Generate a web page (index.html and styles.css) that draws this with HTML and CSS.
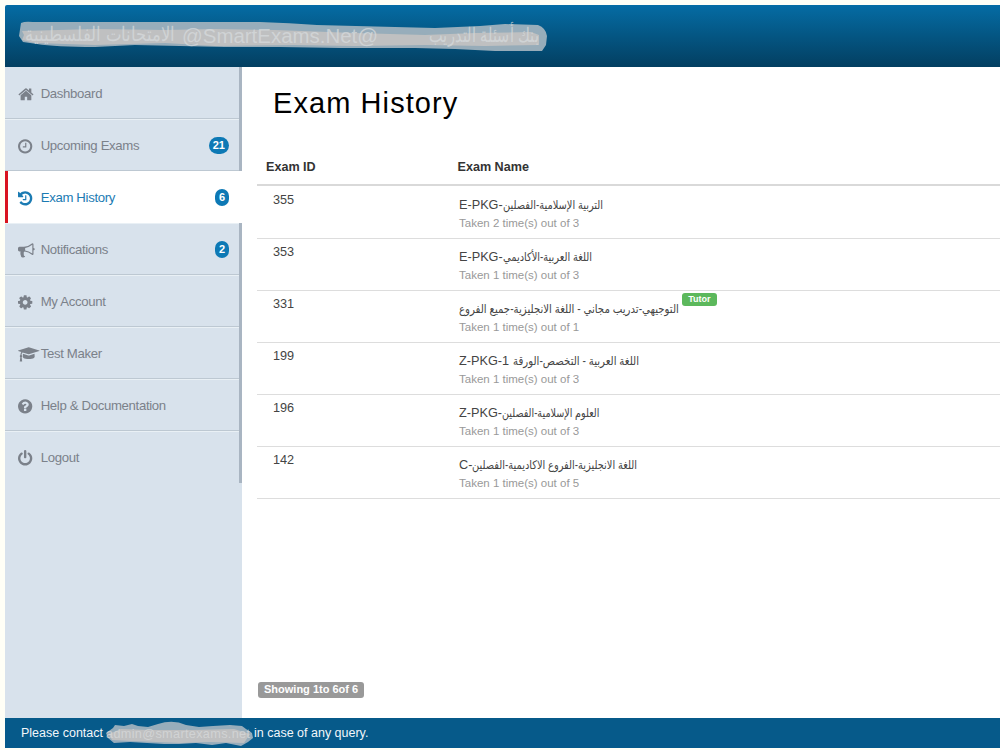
FILE: index.html
```html
<!DOCTYPE html>
<html lang="en">
<head>
<meta charset="utf-8">
<title>Exam History</title>
<link rel="stylesheet" href="styles.css">
</head>
<body>
<div class="app">
  <header class="header">
    <svg class="brand" viewBox="0 0 560 62" width="560" height="62">
      <path class="smear" d="M16 18Q20 16 28 17L130 17 255 17Q285 18 312 20L390 22 430 23 475 21 500 19 533 20Q541 23 542 31L541 40 537 46 490 46 450 44 410 43 335 43 275 42 220 42 130 40 90 42Q50 42 32 39L18 37 14 31Z"/>
      <path class="smear-core" d="M17 26L90 24 160 25 210 24 270 25 350 28 420 30 470 28 526 27 534 30 534 40 480 41 420 40 350 41 290 40 210 41 160 38 90 40 30 38 17 35 19 30Z"/>
      <text x="177" y="38" class="brand-text" textLength="196" lengthAdjust="spacingAndGlyphs">@SmartExams.Net@</text>
      <text x="424" y="37" class="brand-text" textLength="110" lengthAdjust="spacingAndGlyphs">بنك أسئلة التدريب</text>
      <text x="20" y="36" class="brand-text" textLength="150" lengthAdjust="spacingAndGlyphs">الامتحانات الفلسطينية</text>
    </svg>
  </header>
  <div class="body">
    <nav class="sidebar">
      <a class="item"><svg class="icon" viewBox="40 0 1792 1792"><path d="M1472 992v480q0 26-19 45t-45 19h-384v-384h-256v384h-384q-26 0-45-19t-19-45v-480q0-1 .5-3t.5-3l575-474 575 474q1 2 1 6zm223-69l-62 74q-8 9-21 11h-3q-13 0-21-7l-692-577-692 577q-12 8-24 7-13-2-21-11l-62-74q-8-10-7-23.500t11-21.500l719-599q32-26 76-26t76 26l244 204v-195q0-14 9-23t23-9h192q14 0 23 9t9 23v408l219 182q10 8 11 21.500t-7 23.500z"/></svg><span class="label">Dashboard</span></a>
      <a class="item"><svg class="icon" viewBox="128 0 1792 1792"><path d="M1024 544v448q0 14-9 23t-23 9h-320q-14 0-23-9t-9-23v-64q0-14 9-23t23-9h224v-352q0-14 9-23t23-9h64q14 0 23 9t9 23zm416 352q0-148-73-273t-198-198-273-73-273 73-198 198-73 273 73 273 198 198 273 73 273-73 198-198 73-273zm224 0q0 209-103 385.500t-279.500 279.500-385.500 103-385.500-103-279.500-279.500-103-385.500 103-385.500 279.500-279.500 385.500-103 385.500 103 279.500 279.500 103 385.500z"/></svg><span class="label">Upcoming Exams</span><span class="badge">21</span></a>
      <a class="item active"><svg class="icon" viewBox="128 0 1792 1792"><path d="M1664 896q0 156-61 298t-164 245-245 164-298 61q-172 0-327-72.500t-264-204.500q-7-10-6.500-22.500t8.500-20.500l137-138q10-9 25-9 16 2 23 12 73 95 179 147t225 52q104 0 198.500-40.500t163.500-109.500 109.500-163.500 40.500-198.500-40.500-198.500-109.500-163.500-163.500-109.500-198.500-40.500q-98 0-188 35.500t-160 101.500l137 138q31 30 14 69-17 40-59 40h-448q-26 0-45-19t-19-45v-448q0-42 40-59 39-17 69 14l130 129q107-101 244.500-156.500t284.500-55.500q156 0 298 61t245 164 164 245 61 298zm-640-288v448q0 14-9 23t-23 9h-320q-14 0-23-9t-9-23v-64q0-14 9-23t23-9h224v-352q0-14 9-23t23-9h64q14 0 23 9t9 23z"/></svg><span class="label">Exam History</span><span class="badge">6</span></a>
      <a class="item"><svg class="icon" viewBox="0 0 1792 1792"><path d="M1664 640q53 0 90.500 37.500t37.500 90.500-37.500 90.500-90.500 37.500v384q0 52-38 90t-90 38q-417-347-812-380-58 19-91 66t-31 100.500 40 92.500q-20 33-23 65.500t6 58 33.500 55 48 50 61.500 50.500q-29 58-111.500 83t-168.500 11.500-132-55.500q-7-23-29.500-87.500t-32-94.500-23-89-15-101 3.500-98.500 22-110.500h-122q-66 0-113-47t-47-113v-192q0-66 47-113t113-47h480q435 0 896-384 52 0 90 38t38 90v384zm-128 604v-954q-394 302-768 343v270q377 42 768 341z"/></svg><span class="label">Notifications</span><span class="badge">2</span></a>
      <a class="item"><svg class="icon" viewBox="128 0 1792 1792"><path d="M1152 896q0-106-75-181t-181-75-181 75-75 181 75 181 181 75 181-75 75-181zm512-109v222q0 12-8 23t-20 13l-185 28q-19 54-39 91 35 50 107 138 10 12 10 25t-9 23q-27 37-99 108t-94 71q-12 0-26-9l-138-108q-44 23-91 38-16 136-29 186-7 28-36 28h-222q-14 0-24.500-8.500t-11.500-21.500l-28-184q-49-16-90-37l-141 107q-10 9-25 9-14 0-25-11-126-114-165-168-7-10-7-23 0-12 8-23 15-21 51-66.500t54-70.500q-27-50-41-99l-183-27q-13-2-21-12.500t-8-23.500v-222q0-12 8-23t19-13l186-28q14-46 39-92-40-57-107-138-10-12-10-24 0-10 9-23 26-36 98.500-107.500t94.500-71.500q13 0 26 10l138 107q44-23 91-38 16-136 29-186 7-28 36-28h222q14 0 24.500 8.500t11.500 21.500l28 184q49 16 90 37l142-107q9-9 24-9 13 0 25 10 129 119 165 170 7 8 7 22 0 12-8 23-15 21-51 66.500t-54 70.500q26 50 41 98l183 28q13 2 21 12.500t8 23.500z"/></svg><span class="label">My Account</span></a>
      <a class="item"><svg class="icon" viewBox="0 0 1792 1792"><path d="M1774 836l18 316q4 69-82 128t-235 93.500-323 34.500-323-34.500-235-93.500-82-128l18-316 574 181q22 7 48 7t48-7zm530-324q0 23-22 31l-1120 352q-4 1-10 1t-10-1l-652-206q-43 34-71 111.500t-34 178.500q63 36 63 109 0 69-58 107l58 433q2 14-8 25-9 11-24 11h-192q-15 0-24-11-10-11-8-25l58-433q-58-38-58-107 0-73 65-111 11-207 98-330l-333-104q-22-8-22-31t22-31l1120-352q4-1 10-1t10 1l1120 352q22 8 22 31z"/></svg><span class="label">Test Maker</span></a>
      <a class="item"><svg class="icon" viewBox="128 0 1792 1792"><path d="M1024 1376v-192q0-14-9-23t-23-9h-192q-14 0-23 9t-9 23v192q0 14 9 23t23 9h192q14 0 23-9t9-23zm256-672q0-88-55.500-163t-138.500-116-170-41q-243 0-371 213-15 24 8 42l132 100q7 6 19 6 16 0 25-12 53-68 86-92 34-24 86-24 48 0 85.500 26t37.500 59q0 38-20 61t-68 45q-63 28-115.500 86.500t-52.500 125.500v36q0 14 9 23t23 9h192q14 0 23-9t9-23q0-19 21.500-49.500t54.500-49.500q32-18 49-28.500t46-35 44.500-48 28-60.500 12.500-81zm384 192q0 209-103 385.500t-279.500 279.500-385.500 103-385.500-103-279.500-279.500-103-385.500 103-385.500 279.500-279.500 385.500-103 385.500 103 279.500 279.500 103 385.500z"/></svg><span class="label">Help &amp; Documentation</span></a>
      <a class="item last"><svg class="icon" viewBox="128 0 1792 1792"><path d="M1664 896q0 156-61 298t-164 245-245 164-298 61-298-61-245-164-164-245-61-298q0-182 80.500-343t226.500-270q43-32 95.500-25t83.500 50q32 42 24.500 94.500t-49.500 84.500q-98 74-151.500 181t-53.500 228q0 104 40.500 198.500t109.500 163.500 163.500 109.500 198.500 40.500 198.500-40.500 163.500-109.500 109.500-163.500 40.500-198.500q0-121-53.500-228t-151.500-181q-42-32-49.500-84.500t24.500-94.500q31-43 84-50t95 25q146 109 226.500 270t80.500 343zm-640-768v640q0 52-38 90t-90 38-90-38-38-90v-640q0-52 38-90t90-38 90 38 38 90z"/></svg><span class="label">Logout</span></a>
    </nav>
    <main class="main">
      <h1 class="title">Exam History</h1>
      <div class="table">
        <div class="row head"><div>Exam ID</div><div>Exam Name</div></div>
        <div class="row"><div class="id">355</div><div class="exam"><div class="name">E-PKG-<span class="ar">التربية الإسلامية-الفصلين</span></div><div class="taken">Taken 2 time(s) out of 3</div></div></div>
        <div class="row"><div class="id">353</div><div class="exam"><div class="name">E-PKG-<span class="ar">اللغة العربية-الأكاديمي</span></div><div class="taken">Taken 1 time(s) out of 3</div></div></div>
        <div class="row"><div class="id">331</div><div class="exam"><div class="name"><span class="ar wide">التوجيهي-تدريب مجاني - اللغة الانجليزية-جميع الفروع</span><span class="tag">Tutor</span></div><div class="taken">Taken 1 time(s) out of 1</div></div></div>
        <div class="row"><div class="id">199</div><div class="exam"><div class="name">Z-PKG-1 <span class="ar wide">اللغة العربية - التخصص-الورقة</span></div><div class="taken">Taken 1 time(s) out of 3</div></div></div>
        <div class="row"><div class="id">196</div><div class="exam"><div class="name">Z-PKG-<span class="ar narrow">العلوم الإسلامية-الفصلين</span></div><div class="taken">Taken 1 time(s) out of 3</div></div></div>
        <div class="row"><div class="id">142</div><div class="exam"><div class="name">C-<span class="ar">اللغة الانجليزية-الفروع الاكاديمية-الفصلين</span></div><div class="taken">Taken 1 time(s) out of 5</div></div></div>
      </div>
      <span class="count">Showing 1to 6of 6</span>
    </main>
  </div>
  <footer class="footer">
    <span class="foot-start">Please contact</span>
    <svg class="contact" viewBox="0 0 149 30" width="149" height="30">
      <path class="smear" d="M1 15L8 10 10 7 19 8 27 6 33 8 43 9 53 6Q68 1 81 7L94 9 108 8 125 7 137 8 141 11 147 15 148 20 143 24 136 28 121 25 107 27 91 25 74 26 59 26 42 25 25 24 9 25 3 20Z"/>
      <path class="smear-core" d="M4 16L16 11 44 12 61 12 87 12 129 11 145 16 139 25 104 24 76 25 26 23 7 22Z"/>
      <text x="1" y="20" class="mail" textLength="144">admin@smartexams.net</text>
    </svg>
    <span>in case of any query.</span>
  </footer>
</div>
</body>
</html>
```
FILE: styles.css
```css
* { box-sizing: border-box; }
body {
  margin: 0;
  background: #fffff6;
  font-family: "Liberation Sans", Arial, sans-serif;
  color: #444;
}
.app {
  display: flex;
  flex-direction: column;
  height: 750px;
  padding: 5px 0 2px 5px;
  overflow: hidden;
}
.header {
  height: 62px;
  flex: none;
  background: linear-gradient(#056ca4, #033f61);
  border-radius: 2px 0 0 0;
}
.brand { display: block; overflow: visible; }
.brand-text { font-size: 20px; fill: #d6dadc; opacity: .75; }
.smear { fill: #a3b4be; opacity: .93; }
.smear-core { fill: #bfc0c1; }
.body { display: flex; flex: 1; min-height: 0; background: #fff; }
.sidebar { width: 237px; flex: none; background: #d8e2ec; }
.item {
  display: flex;
  align-items: center;
  height: 52px;
  padding: 0 13px 0 13px;
  box-shadow: inset -3px 0 #a9b5c2, inset 0 -1px #bdc8d2, inset 0 1px #e9f0f5;
  color: #7b818a;
  font-size: 13.200px;
  letter-spacing: -.34px;
}
.item:first-child { box-shadow: inset -3px 0 #a9b5c2, inset 0 -1px #bdc8d2; }
.item.active {
  background: #fff;
  color: #1b7bb3;
  box-shadow: inset 3px 0 #d9141e;
}
.item.last { box-shadow: inset -3px 0 #a9b5c2, inset 0 1px #e9f0f5; }
.icon {
  width: 16.700px;
  height: 16.700px;
  margin: 2px 6px 0 0;
  overflow: visible;
  fill: currentColor;
  flex: none;
}
.label { flex: 1; white-space: nowrap; }
.badge {
  height: 17px;
  padding: 0 4px;
  border-radius: 9px;
  background: #0d79b5;
  color: #fff;
  font-size: 11px;
  font-weight: bold;
  letter-spacing: 0;
  line-height: 17px;
}
.main {
  flex: 1;
  display: flex;
  flex-direction: column;
  align-items: flex-start;
  padding: 19px 0 20px 15px;
}
.title {
  margin: 0 0 0 16px;
  font-size: 29px;
  line-height: 34px;
  font-weight: normal;
  letter-spacing: 1.080px;
  color: #000;
}
.table { width: 100%; margin-top: 29px; flex: 1; }
.row {
  display: grid;
  grid-template-columns: 202px 1fr;
  height: 52px;
  border-bottom: 1px solid #ddd;
}
.row.head {
  grid-template-columns: 191.500px 1fr;
  height: 37px;
  padding: 9px 0 0 9px;
  border-bottom: 2px solid #d9d9d9;
  font-size: 12.600px;
  font-weight: bold;
  line-height: 18px;
  color: #333;
}
.row.head + .row { height: 53px; padding-top: 1px; }
.id { padding: 5px 0 0 16px; font-size: 12.700px; line-height: 16px; }
.exam { padding-top: 9px; }
.name {
  display: flex;
  height: 18px;
  font-size: 12.700px;
  line-height: 18px;
  white-space: pre;
}
.ar {
  direction: rtl;
  font-family: "Liberation Sans", "DejaVu Sans", sans-serif;
  font-size: 12px;
  transform: scaleX(.82);
  transform-origin: left center;
}
.ar.wide { transform: scaleX(.848); }
.ar.narrow { transform: scaleX(.8); }
.taken { font-size: 11.500px; line-height: 18px; color: #999; }
.tag {
  height: 13px;
  margin: -7px 0 0 -36px;
  padding: 0 6px;
  border-radius: 3px;
  background: #5cb85c;
  color: #fff;
  font-size: 9px;
  font-weight: bold;
  line-height: 13px;
}
.count {
  height: 16px;
  margin-left: 1px;
  padding: 0 6px;
  border-radius: 3px;
  background: #999;
  color: #fff;
  font-size: 11px;
  font-weight: bold;
  line-height: 15px;
}
.footer {
  display: flex;
  align-items: center;
  height: 30px;
  flex: none;
  padding-left: 16px;
  background: #065a8a;
  color: #f2f7fa;
  font-size: 12.500px;
  white-space: nowrap;
}
.foot-start { width: 84px; }
.contact { display: block; }
.mail { font-size: 12.700px; fill: #d8dadb; opacity: .75; }
```
